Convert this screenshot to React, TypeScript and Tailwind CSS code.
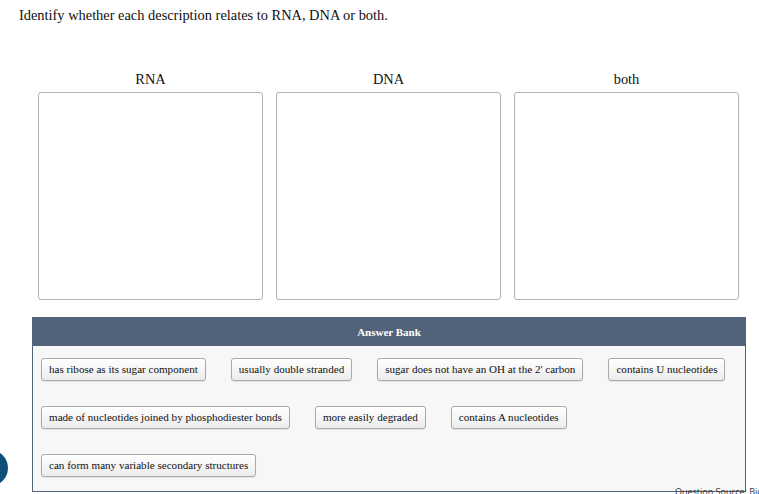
import React from 'react'

const COLUMNS = ['RNA', 'DNA', 'both']

const ROWS: string[][] = [
  [
    'has ribose as its sugar component',
    'usually double stranded',
    "sugar does not have an OH at the 2' carbon",
    'contains U nucleotides',
  ],
  ['made of nucleotides joined by phosphodiester bonds', 'more easily degraded', 'contains A nucleotides'],
  ['can form many variable secondary structures'],
]

function Chip({ label }: { label: string }) {
  return (
    <div className="h-[23px] px-[7px] flex items-center rounded-[3px] border border-[#a9a9a9] bg-gradient-to-b from-white to-[#ececec] text-[11.1px] text-[#111] whitespace-nowrap shadow-[0_1px_1px_rgba(0,0,0,0.08)]">
      {label}
    </div>
  )
}

export default function App() {
  return (
    <div
      className="relative w-[759px] h-[494px] overflow-hidden bg-white text-[#111]"
      style={{ fontFamily: '"Liberation Serif", "Times New Roman", serif' }}
    >
      <p className="pl-[19px] pt-[6px] text-[14.4px] leading-[18px]">
        Identify whether each description relates to RNA, DNA or both.
      </p>

      <div className="flex gap-[13px] pl-[38px] mt-[46px]">
        {COLUMNS.map((c) => (
          <div key={c} className="w-[225px] flex flex-col">
            <div className="text-center text-[14.4px] leading-[18px] mb-[4px]">{c}</div>
            <div className="h-[208px] rounded-[3px] border border-[#b3b3b3] bg-white" />
          </div>
        ))}
      </div>

      <div className="ml-[32px] mt-[17px] w-[714px] border border-[#526278] bg-[#f7f7f7]">
        <div className="h-[28px] bg-[#526278] flex items-center justify-center text-white text-[11px] font-bold">
          Answer Bank
        </div>
        <div className="flex flex-col gap-[25px] pl-[8px] pt-[12px] pb-[14px]">
          {ROWS.map((row, i) => (
            <div key={i} className="flex gap-[25px]">
              {row.map((l) => (
                <Chip key={l} label={l} />
              ))}
            </div>
          ))}
        </div>
      </div>

      <div className="absolute left-[-28px] top-[450px] w-[36px] h-[36px] rounded-full bg-[#0d4f78]" />
      <div
        className="absolute left-[675px] top-[486px] text-[9px] leading-[11px] text-[#333] whitespace-nowrap"
        style={{ fontFamily: '"Open Sans", "Liberation Sans", sans-serif' }}
      >
        Question Source: Biology
      </div>
    </div>
  )
}
